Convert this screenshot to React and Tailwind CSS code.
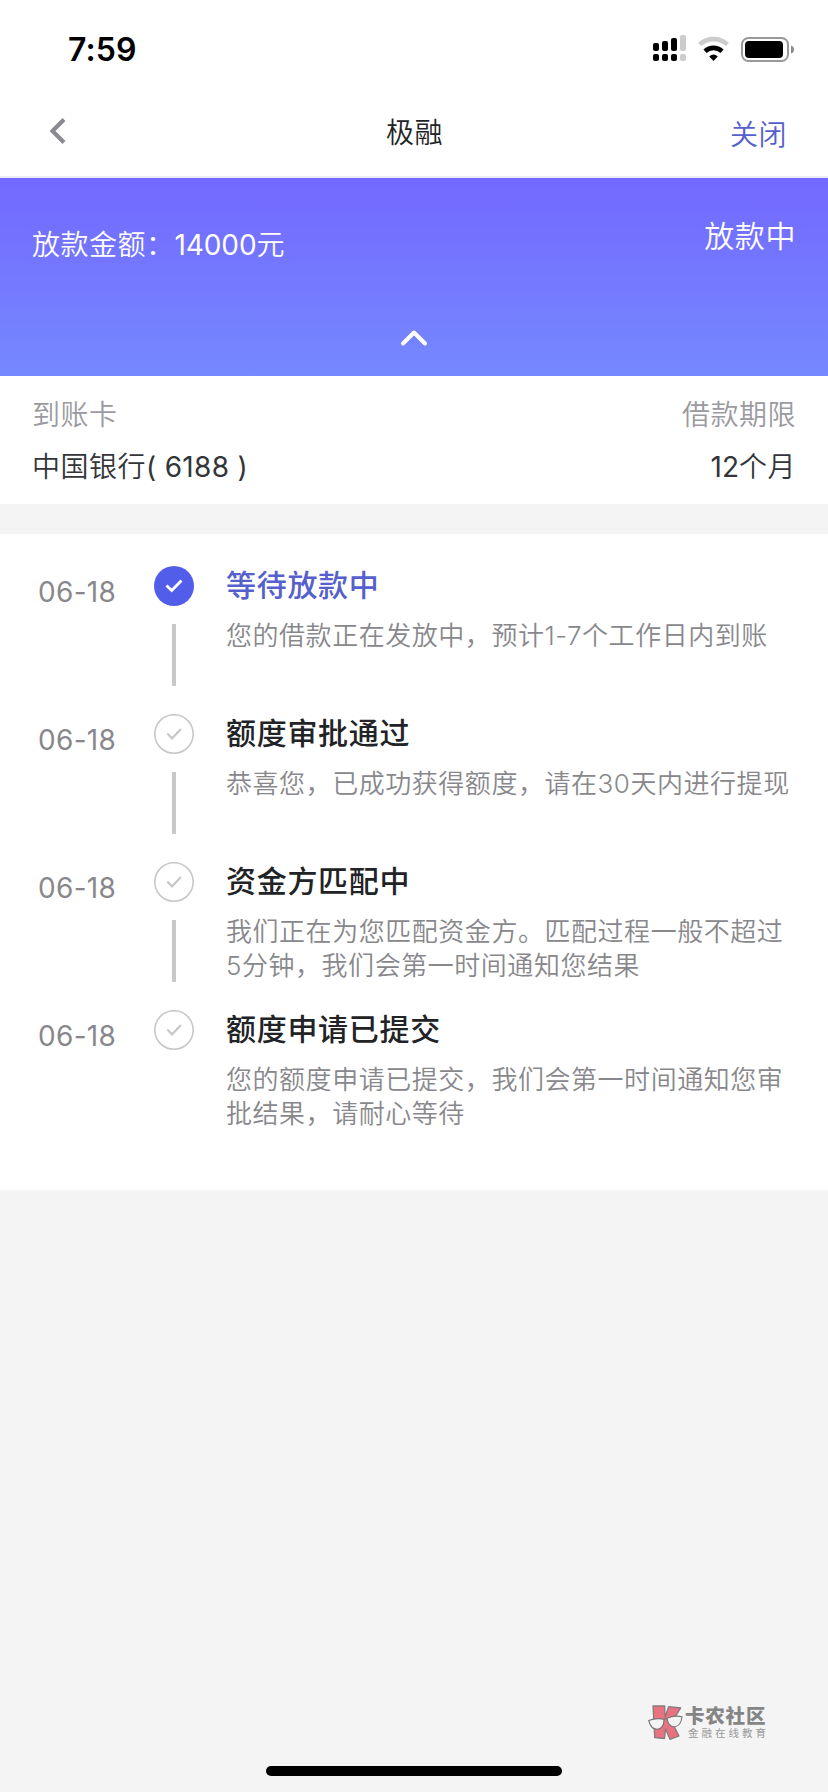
const steps = [
    {
        date: '06-18',
        title: '等待放款中',
        lines: ['您的借款正在发放中，预计1-7个工作日内到账'],
        active: true,
    },
    {
        date: '06-18',
        title: '额度审批通过',
        lines: ['恭喜您，已成功获得额度，请在30天内进行提现'],
    },
    {
        date: '06-18',
        title: '资金方匹配中',
        lines: ['我们正在为您匹配资金方。匹配过程一般不超过', '5分钟，我们会第一时间通知您结果'],
    },
    {
        date: '06-18',
        title: '额度申请已提交',
        lines: ['您的额度申请已提交，我们会第一时间通知您审', '批结果，请耐心等待'],
    },
];

function StatusBar() {
    return (
        <div className="flex h-[88px] items-start justify-between pl-[68px] pr-[33px]">
            <span className="mt-[30px] text-[32px] leading-10 font-semibold tracking-[0.1px] text-black">7:59</span>
            <svg className="mt-[34px]" width="142" height="30" viewBox="0 0 142 30">
                {/* dual sim signal */}
                <g fill="#000">
                    <rect x="0" y="9" width="6" height="8" rx="2" />
                    <rect x="9" y="7" width="6" height="10" rx="2" />
                    <rect x="18" y="4" width="6" height="13" rx="2" />
                    <rect x="0" y="20" width="6" height="7" rx="2" />
                    <rect x="9" y="20" width="6" height="7" rx="2" />
                    <rect x="18" y="20" width="6" height="7" rx="2" />
                </g>
                <g fill="#cccccc">
                    <rect x="27" y="1" width="6" height="16" rx="2" />
                    <rect x="27" y="20" width="6" height="7" rx="2" />
                </g>
                {/* wifi */}
                <path d="M46.6 10.4 A21 21 0 0 1 74.4 10.4" fill="none" stroke="#cccccc" strokeWidth="4.6" />
                <path d="M52 17.2 A12.5 12.5 0 0 1 69 17.2" fill="none" stroke="#000" strokeWidth="4.6" />
                <path d="M56.2 22.6 Q60.5 18.6 64.8 22.6 L60.5 27 Z" fill="#000" />
                {/* battery */}
                <rect x="89" y="4" width="46" height="23" rx="6.5" fill="none" stroke="#999" strokeWidth="2" />
                <rect x="92" y="7" width="38" height="17" rx="4" fill="#000" />
                <path d="M138 11.5 Q141 12.5 141 15.5 Q141 18.5 138 19.5 Z" fill="#8a8a8a" />
            </svg>
        </div>
    );
}

function NavBar() {
    return (
        <div className="grid h-[90px] grid-cols-[1fr_auto_1fr] items-start border-b-2 border-[#ebeaf6] pr-[41px] pl-[42px]">
            <svg className="mt-[29px] ml-[7px]" width="18" height="28" viewBox="0 0 18 28">
                <path d="M15 2.5 L3.5 14 L15 25.5" fill="none" stroke="#8a8a92" strokeWidth="4.2" />
            </svg>
            <h1 className="mt-[25px] text-[28px] leading-10 tracking-[0.5px] text-[#222326]">极融</h1>
            <button className="mt-[27px] justify-self-end text-[28px] leading-10 tracking-[0.5px] text-[#5560cc]">关闭</button>
        </div>
    );
}

function Summary() {
    return (
        <div className="flex h-[198px] flex-col bg-linear-to-b from-[#7368ff] to-[#7588ff] px-8 text-white">
            <div className="flex items-start justify-between">
                <p className="mt-[47px] text-[28px] leading-10 tracking-[0.5px]">
                    放款金额：<span className="font-normal tracking-[-0.1px]">14000</span>元
                </p>
                <p className="mt-[38px] text-[30px] leading-10 tracking-[0.6px]">放款中</p>
            </div>
            <svg className="mx-auto mt-[62px]" width="30" height="22" viewBox="0 0 30 22">
                <path d="M4 16.5 L15 5.5 L26 16.5" fill="none" stroke="#fff" strokeWidth="4" strokeLinecap="round" strokeLinejoin="round" />
            </svg>
        </div>
    );
}

function AccountInfo() {
    return (
        <div className="flex h-32 justify-between bg-white px-8 pt-[13px] text-[28px] leading-[52px] tracking-[0.5px]">
            <div>
                <p className="text-[#9a9aa0]">到账卡</p>
                <p className="text-[#333539]">
                    中国银行<span className="font-normal tracking-[0.3px]">( 6188 )</span>
                </p>
            </div>
            <div className="text-right">
                <p className="text-[#9a9aa0]">借款期限</p>
                <p className="text-[#333539]">
                    <span className="font-normal tracking-normal">12</span>个月
                </p>
            </div>
        </div>
    );
}

function CheckCircle({ active }) {
    return (
        <svg width="40" height="40" viewBox="0 0 40 40">
            {active ? (
                <circle cx="20" cy="20" r="20" fill="#525eea" />
            ) : (
                <circle cx="20" cy="20" r="19.2" fill="#fff" stroke="#c8c8c8" strokeWidth="1.6" />
            )}
            <path
                d={active ? 'M12.5 19.5 L17.7 24.5 L27.5 14.5' : 'M13.3 19.5 L18 24.3 L27 15'}
                fill="none"
                stroke={active ? '#fff' : '#c8c8c8'}
                strokeWidth={active ? 2.8 : 2.2}
            />
        </svg>
    );
}

function Step({ step, last }) {
    return (
        <div className="flex h-[148px] items-start">
            <span className="mt-[6px] w-[116px] text-[28px] leading-10 font-normal tracking-[0.3px] text-[#88888c]">
                {step.date}
            </span>
            <div className="flex w-10 flex-col items-center">
                <CheckCircle active={step.active} />
                {!last && <div className="mt-[18px] h-[62px] w-1 bg-[#c8c8c8]" />}
            </div>
            <div className="-mt-px ml-8 whitespace-nowrap">
                <h2
                    className={`text-[30px] leading-10 font-medium tracking-[0.7px] ${
                        step.active ? 'text-[#5560cc]' : 'text-[#222326]'
                    }`}
                >
                    {step.title}
                </h2>
                <div className="mt-[14px] text-[26px] leading-[34px] tracking-[0.54px] text-[#88888c]">
                    {step.lines.map((line) => (
                        <p key={line}>{line}</p>
                    ))}
                </div>
            </div>
        </div>
    );
}

function Watermark() {
    return (
        <div className="mt-auto mr-[59px] mb-6 flex items-start self-end">
            <svg width="36" height="38" viewBox="0 0 36 38">
                <path
                    d="M5 2 L16.7 2 L17 13 L20.7 2.7 L32.7 4 L24 18 L31 32 L22 35.3 L17.5 25 L16.5 34.5 L6.7 33.7 Z"
                    fill="#e8727f"
                    stroke="#857c7c"
                    strokeWidth="1.3"
                    strokeLinejoin="round"
                />
                <g fill="#f4f4f4" stroke="#777" strokeWidth="1.1">
                    <path d="M0.7 16.5 Q8 13.5 16 15.3 Q16 24.5 9.5 25.3 Q3 25.5 0.7 16.5 Z" />
                    <path d="M19 14.3 Q26 11 34 12.7 Q33 22 26.5 22.7 Q20.5 23 19 14.3 Z" />
                    <path d="M16 16 Q17.5 14 19 14.8" fill="none" />
                </g>
            </svg>
            <div className="ml-px flex flex-col text-[#858585]">
                <span className="text-[19.5px] leading-6 font-black tracking-[0.8px]">卡农社区</span>
                <span className="ml-[3px] text-[10.5px] leading-3 font-normal tracking-[3px] text-[#999]">金融在线教育</span>
            </div>
        </div>
    );
}

export default function App() {
    return (
        <div className="flex h-[1792px] w-[828px] flex-col overflow-hidden bg-[#f4f4f4] font-['Inter','Noto_Sans_CJK_SC',sans-serif] font-[350]">
            <div className="bg-white">
                <StatusBar />
                <NavBar />
            </div>
            <Summary />
            <AccountInfo />

            {/* Timeline */}
            <div className="mt-[30px] h-[656px] bg-white pt-8 pl-[38px]">
                {steps.map((step, i) => (
                    <Step key={step.title} step={step} last={i === steps.length - 1} />
                ))}
            </div>

            <Watermark />
            <div className="mx-auto mb-4 h-[10px] w-[296px] shrink-0 rounded-full bg-black" />
        </div>
    );
}
